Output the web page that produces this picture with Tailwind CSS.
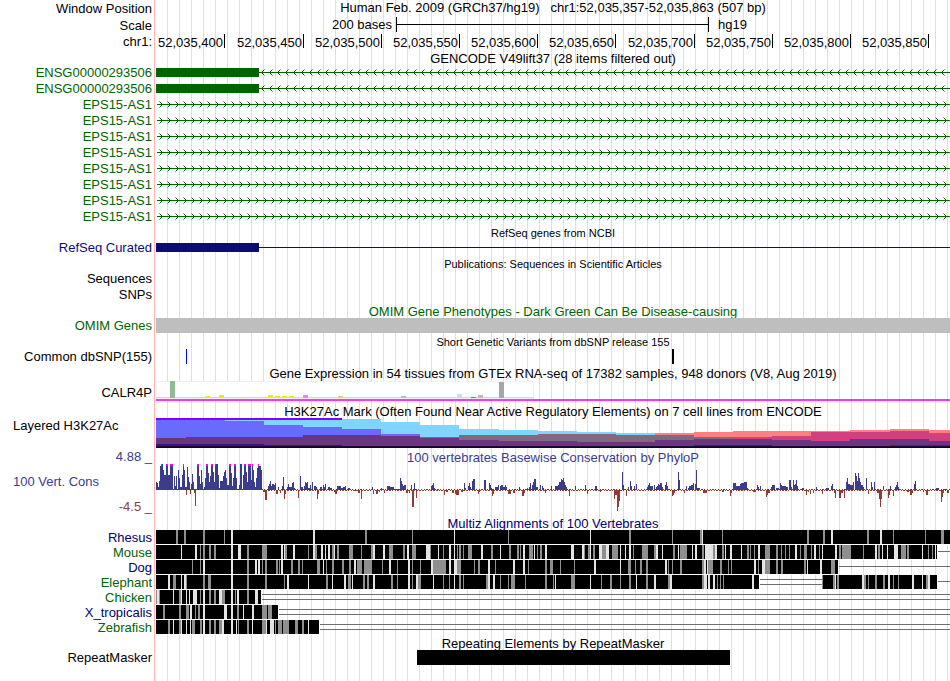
<!DOCTYPE html>
<html lang="en">
<head>
<meta charset="utf-8">
<title>Genome Browser - hg19 chr1:52,035,357-52,035,863</title>
<script src="https://cdn.jsdelivr.net/npm/@tailwindcss/browser@4"></script>
</head>
<body class="bg-white text-black">
<main id="browser" class="min-h-screen overflow-hidden font-['Liberation_Sans',Arial,sans-serif] text-[13px] leading-[17px] whitespace-nowrap bg-no-repeat bg-[linear-gradient(#ffb4b4,#ffb4b4),repeating-linear-gradient(to_right,transparent_0px,transparent_11px,#dcdcfa_11px,#dcdcfa_12px)] [background-position:154px_0,156px_0] [background-size:1px_100%,100%_100%]">

  <header>
    <div class="grid grid-cols-[152px_1fr] gap-1 h-[17px]">
      <div class="text-right">Window Position</div>
      <h1 class="text-center leading-[15px]">Human Feb. 2009 (GRCh37/hg19)&nbsp;&nbsp; chr1:52,035,357-52,035,863 (507 bp)</h1>
    </div>
    <div class="grid grid-cols-[152px_1fr] gap-1 h-4">
      <div class="text-right">Scale</div>
      <div class="flex leading-[15px]">
        <span class="w-[240px] shrink-0 pr-1 text-right">200 bases</span>
        <span class="flex w-[313px] shrink-0 h-[15px] items-center border-x border-black"><span class="h-px w-full bg-black"></span></span>
        <span class="pl-[9px]">hg19</span>
      </div>
    </div>
    <div class="grid grid-cols-[152px_1fr] gap-1 h-4">
      <div class="text-right">chr1:</div>
      <div class="flex pt-px text-right leading-[17px] *:h-[14px] *:shrink-0 *:border-r *:border-black *:pr-px">
        <span class="w-[69px]">52,035,400</span><span class="w-[79px]">52,035,450</span><span class="w-[78px]">52,035,500</span><span class="w-[78px]">52,035,550</span><span class="w-[78px]">52,035,600</span><span class="w-[78px]">52,035,650</span><span class="w-[79px]">52,035,700</span><span class="w-[78px]">52,035,750</span><span class="w-[78px]">52,035,800</span><span class="w-[78px]">52,035,850</span>
      </div>
    </div>
  </header>

  <section id="gencode" class="text-[#006400]">
    <h2 class="ml-[156px] h-[15px] text-center leading-[19px] text-black">GENCODE V49lift37 (28 items filtered out)</h2>
  </section>

  <section>
    <h2 class="ml-[156px] h-[15px] text-center text-[11px] leading-[18px]">RefSeq genes from NCBI</h2>
    <div class="grid grid-cols-[152px_1fr] gap-1 h-4">
      <div class="text-right text-[#0c0c78]">RefSeq Curated</div>
      <div class="flex items-center"><span class="h-[9px] w-[103px] bg-[#0c0c78]"></span><span class="h-px grow bg-[#0c0c78]"></span></div>
    </div>
  </section>

  <section>
    <h2 class="ml-[156px] h-[15px] text-center text-[11px] leading-[18px]">Publications: Sequences in Scientific Articles</h2>
    <div class="h-4 w-[152px] text-right">Sequences</div>
    <div class="h-4 w-[152px] text-right">SNPs</div>
  </section>

  <section class="text-[#006400]">
    <h2 class="ml-[156px] h-4 overflow-hidden text-center leading-[19px]">OMIM Gene Phenotypes - Dark Green Can Be Disease-causing</h2>
    <div class="grid grid-cols-[152px_1fr] gap-1 h-[15px]">
      <div class="text-right leading-[15px]">OMIM Genes</div>
      <div class="bg-[#bebebe]"></div>
    </div>
  </section>

  <section>
    <h2 class="ml-[156px] h-[15px] text-center text-[11px] leading-[18px]">Short Genetic Variants from dbSNP release 155</h2>
    <div class="grid grid-cols-[152px_1fr] gap-1 h-4">
      <div class="text-right">Common dbSNP(155)</div>
      <svg class="h-4 w-full" shape-rendering="crispEdges"><rect x="30" y="1" width="1" height="15" fill="#0000ff"/><rect x="516" y="1" width="2" height="15"/></svg>
    </div>
  </section>

  <section>
    <h2 class="ml-[156px] h-[15px] text-center leading-[19px]">Gene Expression in 54 tissues from GTEx RNA-seq of 17382 samples, 948 donors (V8, Aug 2019)</h2>
    <div class="grid grid-cols-[152px_1fr] gap-1 h-[23px]">
      <div class="pt-[5px] text-right">CALR4P</div>
      <svg class="h-[23px] w-full" shape-rendering="crispEdges"><g id="gtex" transform="translate(-156 -379)"><rect x="156" y="381" width="378" height="18" fill="#f0f0f0"/><rect x="157" y="382" width="376" height="15" fill="#ffffff"/><rect x="156" y="397" width="378" height="1" fill="#d8d8d8"/><rect x="156" y="399" width="9999" height="2" fill="#ff33ff"/></g></svg>
    </div>
  </section>

  <section>
    <h2 class="ml-[156px] h-[15px] text-center leading-[19px]">H3K27Ac Mark (Often Found Near Active Regulatory Elements) on 7 cell lines from ENCODE</h2>
    <div class="grid grid-cols-[152px_1fr] gap-1 h-[31px]">
      <div class="pl-[13px]">Layered H3K27Ac</div>
      <svg class="h-[31px] w-full" shape-rendering="crispEdges"><g id="h3k" transform="translate(-156 -417)"></g></svg>
    </div>
  </section>

  <section class="text-[#3c3c8c]">
    <div class="grid grid-cols-[152px_1fr] gap-1 h-[15px]">
      <div class="text-right">4.88 _</div>
      <h2 class="text-center leading-[19px]">100 vertebrates Basewise Conservation by PhyloP</h2>
    </div>
    <div class="grid grid-cols-[152px_1fr] gap-1 h-[51px]">
      <div class="flex flex-col gap-2 pt-[10px]"><span class="pl-[13px]">100 Vert. Cons</span><span class="text-right text-[#8c3c3c]">-4.5 _</span></div>
      <svg class="h-[51px] w-full" shape-rendering="crispEdges"><g id="phylop" transform="translate(-156 -463)"></g></svg>
    </div>
  </section>

  <section id="multiz">
    <h2 class="ml-[156px] h-4 overflow-hidden text-center leading-[19px] text-[#00006e]">Multiz Alignments of 100 Vertebrates</h2>
  </section>

  <section>
    <h2 class="ml-[156px] h-[15px] text-center leading-[17px]">Repeating Elements by RepeatMasker</h2>
    <div class="grid grid-cols-[152px_1fr] gap-1 h-4">
      <div class="text-right leading-[15px]">RepeatMasker</div>
      <svg class="h-4 w-full" shape-rendering="crispEdges"><rect x="261" y="0" width="313" height="15"/></svg>
    </div>
  </section>
</main>

<script>
const el = id => document.getElementById(id);
const rect = (x, y, w, h, f) => `<rect x="${x}" y="${y}" width="${w}" height="${h}" fill="${f}"/>`;

// Gene models: an exon block followed by an intron with strand chevrons
function gene(name, reverse) {
  let d = '';
  if (reverse) for (let x = 105; x < 2400; x += 8) d += `M${x+1} 7h1v1h-1zM${x+1} 9h1v1h-1zM${x+2} 6h1v1h-1zM${x+2} 10h1v1h-1z`;
  else for (let x = 6; x < 2400; x += 8) d += `M${x-1} 7h1v1h-1zM${x-1} 9h1v1h-1zM${x-2} 6h1v1h-1zM${x-2} 10h1v1h-1z`;
  let faint = '';
  if (reverse) for (let x = 108; x < 2400; x += 8) faint += `M${x} 5h1v1h-1zM${x} 11h1v1h-1z`;
  else for (let x = 3; x < 2400; x += 8) faint += `M${x} 5h1v1h-1zM${x} 11h1v1h-1z`;
  const body = (reverse ? rect(0, 4, 103, 9, '#006400') + rect(103, 8, 9999, 1, '#006400') : rect(1, 8, 9999, 1, '#006400'))
    + `<path d="${d}" fill="#006400"/><path d="${faint}" fill="#7fb17f"/>`;
  return `<div class="grid grid-cols-[152px_1fr] gap-1 h-4"><div class="text-right">${name}</div><svg class="h-4 w-full" shape-rendering="crispEdges">${body}</svg></div>`;
}
let genes = gene('ENSG00000293506', true).repeat(2) + gene('EPS15-AS1', false).repeat(8);
el('gencode').insertAdjacentHTML('beforeend', genes);

// GTEx tissue bars: x, height, colour
el('gtex').insertAdjacentHTML('beforeend', [[170,17,'#8fbc8f'],[205,2,'#eeee00'],[212,1,'#eeee00'],[219,3,'#eeee00'],[240,1,'#eeee00'],[247,1,'#eeee00'],[254,1,'#eeee00'],[261,1,'#eeee00'],[268,3,'#eeee00'],[275,2,'#eeee00'],[282,2,'#eeee00'],[289,2,'#eeee00'],[303,3,'#ee82ee'],[338,2,'#eec591'],[401,2,'#cdb79e'],[457,4,'#d9d9d9'],[471,1,'#1e90ff'],[478,3,'#cdb79e'],[499,16,'#a6a6a6']]
  .map(([x,h,c]) => rect(x, 398-h, 5, h, c)).join(''));

// H3K27Ac layers: start, end, then y/colour pairs from the top down
const L='#80d4ff', B='#6a6aff', P='#6b357f', G='#806a80', S='#ff8080', K='#d4407f';
el('h3k').innerHTML = [
 [156,186,420,B,438,P],[186,225,420,B,437,P],[225,264,420,L,421,B,437,P],[264,303,420,L,425,B,437,P],[303,342,420,L,427,B,435,P],
 [342,381,419,L,429,B,435,P],[381,420,422,L,434,B,436,P],[420,459,425,L,437,G,438,P],[459,499,429,L,435,G,440,P],[499,538,430,L,435,G,441,P],
 [538,577,431,L,434,G,441,P],[577,616,432,L,434,G,442,P],[616,655,433,L,435,G,442,P],[655,694,433,S,435,G,440,P],[694,733,432,S,437,G,439,P],
 [733,772,431,S,437,K,439,P],[772,811,431,S,436,K,440,P],[811,850,431,S,432,K,441,P],[850,890,430,S,432,K,439,P],[890,929,429,S,431,K,439,P],[929,3000,430,S,433,K,441,P]]
 .map(([a,b,...l]) => { let s=''; for (let i=0;i<l.length;i+=2) s += rect(a, l[i], b-a, 448-l[i], l[i+1]); return s; }).join('')
 + rect(156,418,186,2,'#7f00ff') + rect(156,444,108,2,'#3a1580') + rect(264,445,78,1,'#3a1580') + rect(420,446,39,1,'#2a1080')
 + rect(694,445,78,1,'#33206e') + rect(890,445,60,1,'#6b2040') + rect(156,446,3000,2,'#1c0c38') + rect(156,447,3000,1,'#100818');

// PhyloP scores: x, width, height (negative values hang below the axis)
const scores = `156,1,8 157,1,7 158,1,3 159,1,9 160,1,24 161,2,26 163,1,20 164,2,15 166,2,26 168,2,15 170,3,26 174,1,14 175,1,4 176,1,14 178,1,20 179,1,12 180,2,3 182,1,15 183,1,26 184,1,20 185,2,3 187,1,23 188,1,13 189,1,8 191,1,6 192,1,16 193,1,8 195,1,-16 194,1,-3 186,1,-5 190,1,-4 197,2,26 199,1,14 200,1,6 201,1,20 202,1,8 204,1,3 205,1,12 206,2,26 208,1,17 209,1,8 210,1,14 211,2,26 213,1,18 214,1,8 215,3,26 218,1,15 219,1,2 220,3,9 223,1,14 224,1,18 225,1,20 226,1,12 227,2,5 229,2,26 231,1,17 232,1,4 233,1,12 234,2,26 236,1,12 239,1,5 240,2,26 243,1,15 244,2,26 246,1,18 247,1,8 248,3,26 251,1,10 252,1,26 253,1,20 254,1,8 255,1,3 256,1,12 257,1,22 258,1,26 259,2,24 261,1,20
263,2,-2 265,2,-10 268,1,4 269,1,6 270,1,9 271,1,4 272,2,6 274,1,5 275,1,7 276,2,-4 278,1,3 280,1,-3 282,1,4 283,1,13 284,1,-9 285,1,-4 287,1,3 288,1,6 289,2,3 291,1,3 292,1,7 293,1,8 294,1,2 298,1,-8 300,1,14 301,2,3 304,1,4 305,1,8 306,1,7 307,1,8 308,2,2 310,1,5 312,1,8 314,2,4 316,1,3 317,1,-9 318,1,-4 320,2,3 323,1,5 324,1,3 325,1,6 328,2,3 330,2,2 334,1,-2 335,2,-4 337,4,4 341,2,2 343,2,3 345,1,4 348,2,2 353,4,-1 358,2,-3 361,1,-9 364,1,-1 372,1,3 373,1,-4 376,2,-4 379,1,-2 381,1,2 384,1,-3 387,3,4 390,4,3 394,6,1 400,1,12 401,1,9 402,1,6 403,1,4 404,2,5 406,2,-3 409,1,-3 411,1,5 412,2,-17 414,1,7 416,1,-8 431,1,4 432,1,5 433,1,7 434,1,2 436,2,-1 444,1,-5 446,2,-2 452,2,-3 455,1,-4 456,3,-5 461,2,-2 464,1,7 465,1,2 468,1,4 469,1,7 470,1,3 472,1,9 473,2,11 478,1,-4 479,1,-2 484,2,10 489,1,7 490,1,5 491,1,2 492,1,-6 493,1,-4 495,3,3 498,1,5 500,1,4 501,2,5 503,2,3 505,1,5 506,1,3 508,3,-4 513,2,-3 519,1,3 522,2,-6 524,1,-3 527,1,2 529,1,3 530,1,7 532,1,5 533,1,8 534,1,11 535,1,11 536,2,3 540,1,5 542,1,4 543,1,2 545,1,-3 551,1,4 555,3,4 558,1,5 559,1,8 560,1,8 561,1,11 562,1,10 563,1,12 564,1,8 565,1,5 566,1,3 569,1,-6 575,1,4 585,1,5 587,1,-4 595,2,4 600,1,-2 614,1,-9 615,1,-5 616,1,-5 617,1,-21 618,1,-17 619,1,-11 622,1,18 623,1,5 626,1,-6 628,1,3 630,1,9 631,1,4 634,1,4 636,1,6
647,1,3 648,1,5 649,1,7 650,3,4 654,1,5 656,1,3 657,1,4 658,1,6 659,1,5 660,2,7 662,1,3 665,1,5 666,1,8 667,1,4 672,1,-6 673,1,-5 674,1,-3 678,1,18 679,1,10 684,1,-3 686,1,4 688,1,2 689,2,4 691,2,5 693,1,7 695,1,6 696,1,20 697,3,2 703,4,-3 722,2,-2 730,1,-6 731,1,-3 733,3,7 736,4,4 740,1,6 741,3,7 744,3,8 747,1,2 753,3,-2 757,1,5 758,1,3 760,1,4 766,1,-7 767,1,-5 768,2,-3 771,1,3 772,3,5 776,3,2 780,1,7 781,1,5 782,4,4 786,2,3 789,2,10 791,1,3 793,1,10 794,1,5 795,1,6 796,1,10 797,1,4 802,2,2 806,1,-5 808,1,-2 810,1,-4 813,1,-3 816,1,3 822,1,-4 826,3,2 831,1,4 832,1,6 834,1,-3 835,1,-8 839,2,-8 841,2,-3 844,1,-8 846,1,8 847,1,12 848,2,6 850,3,5 853,1,8 855,1,17 856,1,14 857,1,9 858,1,17 859,1,12 860,1,8 861,2,5 863,1,3 866,1,12 868,1,-4 871,1,8 872,1,3 874,1,8 877,2,-3 879,1,-9 880,1,-17 881,1,-9 883,1,4 888,1,-8 889,1,-5 893,1,-6 890,1,4 895,1,3 896,1,5 897,1,8 898,1,3 907,2,-2 910,2,-5 912,1,-3 914,1,6 915,1,9 923,1,-2 926,2,-5 936,3,2 941,1,-12 942,1,-7 943,1,-3 945,1,1 947,2,-3`
 .split(/\s+/).map(s => s.split(',').map(Number));
let wiggle = rect(156,489,106,1,'#3c3c8c');
for (let x = 262; x < 950; x++) { const up = (x*x*7 + x*13) % 11 < 5; wiggle += rect(x, up ? 489 : 490, 1, 1, up ? '#3c3c8c' : '#8c3c3c'); }
for (const [x,w,h] of scores) wiggle += h > 0 ? rect(x, 490-h, w, h, '#3c3c8c') : rect(x, 490, w, -h, '#8c3c3c');
// Scores above the view limit get a magenta cap
for (const [x,w] of [[161,1],[166,2],[170,3],[183,1],[197,2],[206,2],[211,2],[215,1],[229,2],[234,2],[244,2],[248,3],[252,1],[258,1]]) wiggle += rect(x,464,w,2,'#ff00ff');
el('phylop').innerHTML = wiggle;

// Alignment rows: aligned spans, gap lines, and lower-identity columns (g = mid, w = low)
const species = [
 ['Rhesus','b',[[156,3000]],[], '176,2g 184,2g 203,2g 224,1g 231,2w 313,2w 365,2g 412,1g 454,1w 508,1g 590,1w 629,2g 672,1g 700,2g 702,1w 722,1g 807,2g 823,2g 831,2w 867,2g 880,2w 893,1g 925,1g 941,3g'],
 ['Mouse','g',[[156,937]],[[938,3000,6]], '181,1w 195,2w 200,1g 203,2g 209,2g 214,2g 231,2w 238,3w 247,2g 262,5g 281,2w 284,1w 285,2g 293,2w 308,1g 313,2w 315,2g 321,2w 325,1w 328,2w 332,2g 334,1w 337,2g 349,4g 361,1g 371,2g 373,2w 383,2w 389,4g 403,2g 407,2w 412,4g 426,4w 430,1g 438,1w 443,1g 449,2w 454,1w 457,1g 459,2g 463,1g 468,4g 481,2w 491,2g 500,1w 509,2g 517,2g 520,1g 523,2w 529,4g 534,1w 537,1g 540,2g 545,2w 571,3w 582,2w 584,1g 588,2g 590,1w 593,2g 599,3w 602,4g 606,3w 612,6g 620,1w 625,1w 629,2w 633,1g 642,6g 654,2g 656,2w 662,1w 673,2g 678,1w 680,7g 692,1w 695,2w 702,2g 705,8w 713,2g 715,2w 722,2g 725,1w 730,2w 741,1w 747,2g 750,1g 754,1g 758,2w 765,5g 776,2g 781,1g 785,1g 789,1g 795,2w 800,1g 804,3g 811,1g 814,2w 819,1g 822,1w 835,2w 839,2g 842,9g 863,1g 875,2w 878,2g 882,1w 887,1w 894,4w 901,5g 907,2g 922,1w 928,1g 932,1g 935,1w'],
 ['Dog','b',[[156,838]],[[839,3000,6]], '192,1g 200,1g 203,2w 231,2w 247,2g 255,2w 258,2w 262,1g 265,2g 276,2g 279,1g 281,2w 291,2g 298,2g 302,1g 317,3g 323,1w 326,1g 332,2g 342,2g 349,2g 354,2w 357,5g 364,8g 382,1g 389,2w 397,1g 408,2w 412,1g 420,1g 431,2w 433,13g 449,2w 454,3w 457,4g 474,1g 478,2g 488,2w 495,1g 513,2w 523,2w 528,1g 545,2g 550,3g 560,1g 574,1g 594,2w 620,1w 628,3g 635,1g 640,2g 646,2g 665,2w 668,1g 672,1g 680,2g 702,2g 704,2w 707,1w 708,2g 710,3g 720,2g 728,1g 731,1g 754,2w 758,1g 762,3w 765,5g 776,2g 781,2g 804,2g 807,1w 820,2w 831,4g'],
 ['Elephant','g',[[156,759],[822,937]],[[760,822,4],[760,822,9],[938,3000,6]], '168,2w 173,3g 181,1w 184,2w 186,1g 203,2g 208,3g 231,2w 247,2g 265,2g 284,1g 287,2w 308,1w 326,2g 332,1w 344,2w 348,3g 352,1w 363,2g 367,2g 373,2w 391,2g 397,1g 408,2w 412,1g 416,2w 418,3g 433,1w 443,1g 449,1g 454,1w 459,2g 463,1g 486,2g 488,2w 493,2w 500,1g 508,1g 511,4g 525,1g 545,2g 553,1g 555,1w 571,4g 590,1w 601,1g 610,2g 620,1g 629,2g 636,1w 646,2g 654,2w 668,2g 670,2w 702,2g 704,3w 708,2w 713,2w 717,1g 720,1g 723,1g 752,2w 822,1g 833,2g 835,1w 837,2g 862,2w 864,2g 868,1g 875,2g 883,2g 888,2w 893,1g 898,1g 912,2w 922,1w 926,2g 928,2w'],
 ['Chicken','g',[[156,261]],[[262,3000,4],[262,3000,9]], '156,1g 157,2w 159,1g 173,1w 179,2g 181,1w 186,1w 189,1w 193,4w 200,1g 203,2w 209,2g 214,2g 219,3w 222,3g 231,2w 235,1g 237,2w 247,2g 255,3w'],
 ['X_tropicalis','b',[[156,278]],[[279,3000,4],[279,3000,9]], '163,2g 179,2g 186,3g 190,2w 195,1g 198,2g 203,2w 224,3w 231,2w 237,2g 243,1w 252,2w 262,5g 268,4g'],
 ['Zebrafish','g',[[156,319]],[[320,3000,4],[320,3000,9]], '168,2g 173,1w 179,2g 181,1w 186,1w 190,1w 192,3g 200,2g 203,2w 209,2g 214,2g 219,3g 222,2w 231,2w 236,1w 238,1g 247,2g 252,1w 262,4g 266,1w 270,4w 275,1g 278,4g 283,6g 295,3g 302,2g 308,1w']
];
const labelClass = { b: 'text-right leading-[15px] text-[#00006e]', g: 'text-right leading-[15px] text-[#006400]' };
el('multiz').insertAdjacentHTML('beforeend', species.map(([name, tone, spans, gaps, cols]) => {
  const marks = cols.split(' ').map(c => { const [x, rest] = c.split(','); return rect(x, 0, parseInt(rest), 14, rest.endsWith('g') ? '#8f8f8f' : '#e4e4e4'); }).join('');
  const body = spans.map(([a,b]) => rect(a,0,b-a,15,'#ffffff') + rect(a,0,b-a,14,'#000000')).join('') + marks + gaps.map(([a,b,y]) => rect(a,y,b-a,1,'#6e6e6e')).join('');
  return `<div class="grid grid-cols-[152px_1fr] gap-1 h-[15px]"><div class="${labelClass[tone]}">${name}</div><svg class="h-[15px] w-full" shape-rendering="crispEdges"><g transform="translate(-156 0)">${body}</g></svg></div>`;
}).join(''));
</script>
</body>
</html>
